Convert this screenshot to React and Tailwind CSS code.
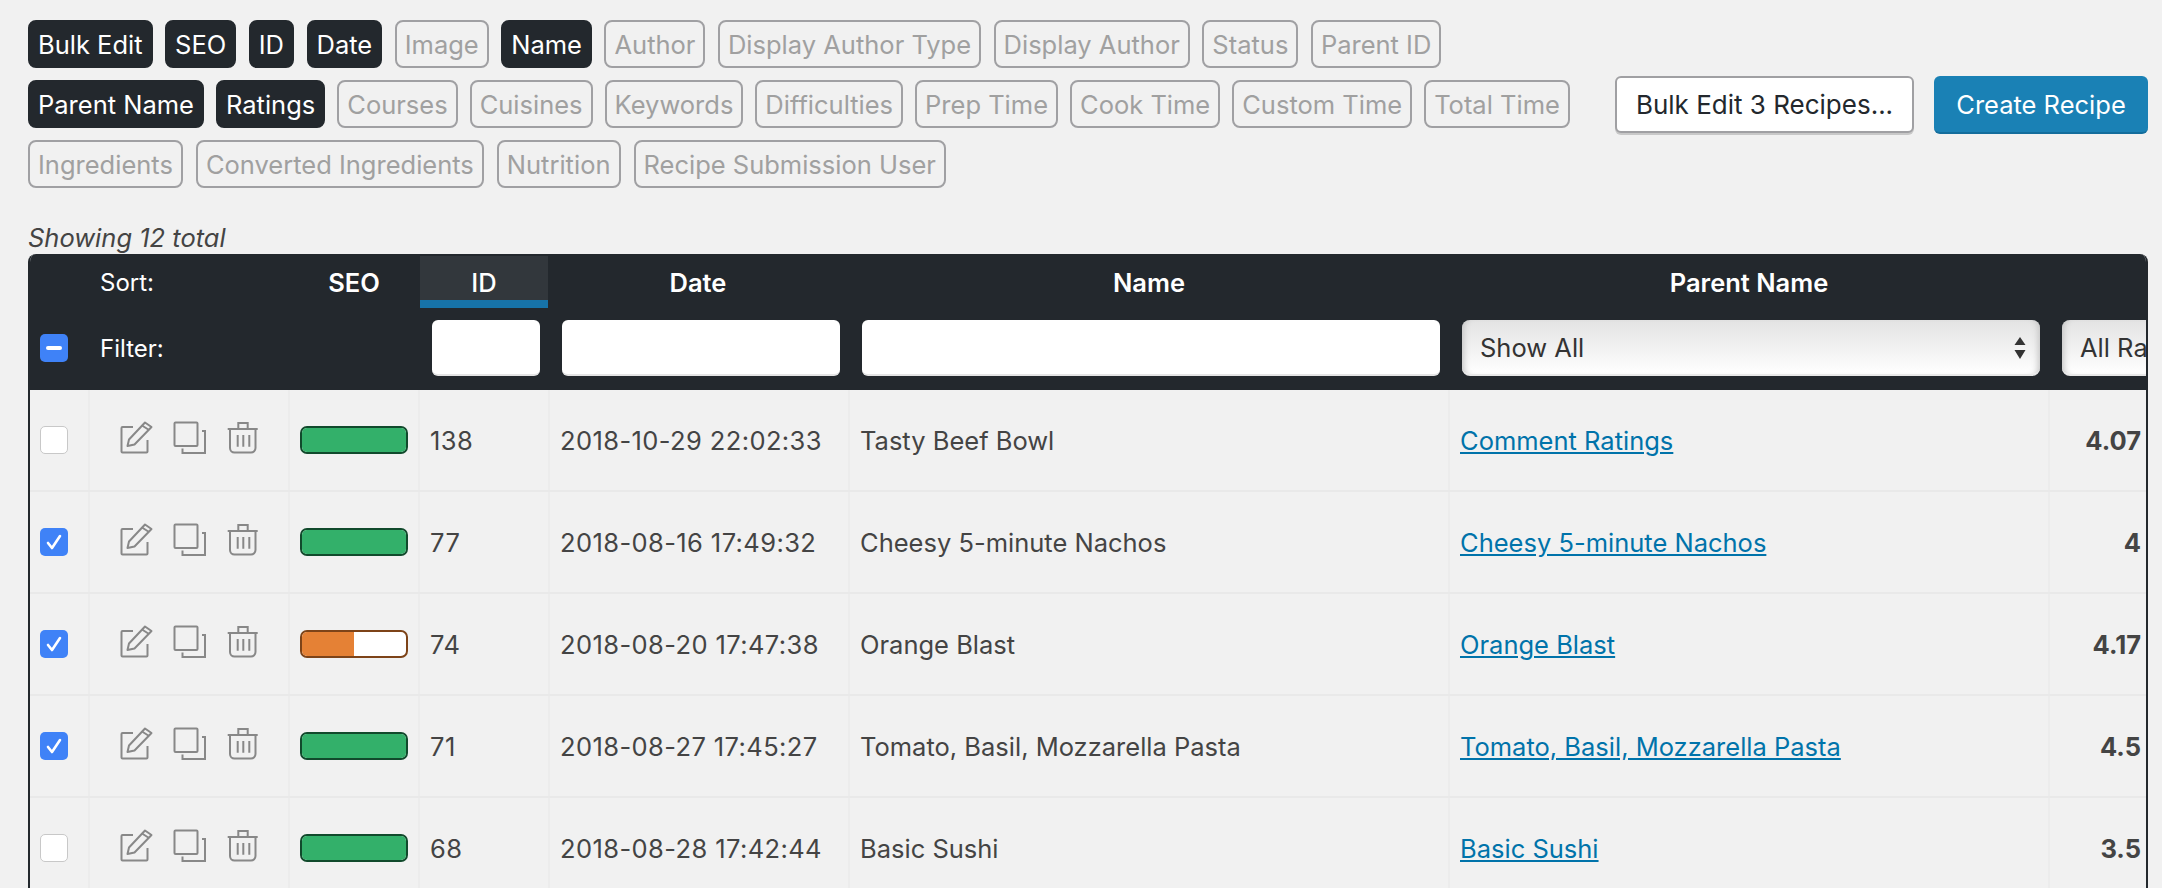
const on = ["Bulk Edit","SEO","ID","Date","Name","Parent Name","Ratings"];
const tagRows = [
  { gap: "gap-[12.5px]", tags: ["Bulk Edit","SEO","ID","Date","Image","Name","Author","Display Author Type","Display Author","Status","Parent ID"] },
  { gap: "gap-3", tags: ["Parent Name","Ratings","Courses","Cuisines","Keywords","Difficulties","Prep Time","Cook Time","Custom Time","Total Time"] },
  { gap: "gap-[13px]", tags: ["Ingredients","Converted Ingredients","Nutrition","Recipe Submission User"] },
];
const rows = [
  { id: 138, date: "2018-10-29 22:02:33", name: "Tasty Beef Bowl", parent: "Comment Ratings", rating: "4.07", checked: false, seo: "green" },
  { id: 77, date: "2018-08-16 17:49:32", name: "Cheesy 5-minute Nachos", parent: "Cheesy 5-minute Nachos", rating: "4", checked: true, seo: "green" },
  { id: 74, date: "2018-08-20 17:47:38", name: "Orange Blast", parent: "Orange Blast", rating: "4.17", checked: true, seo: "orange" },
  { id: 71, date: "2018-08-27 17:45:27", name: "Tomato, Basil, Mozzarella Pasta", parent: "Tomato, Basil, Mozzarella Pasta", rating: "4.5", checked: true, seo: "green" },
  { id: 68, date: "2018-08-28 17:42:44", name: "Basic Sushi", parent: "Basic Sushi", rating: "3.5", checked: false, seo: "green" },
];

function Tag({ label }) {
  const active = on.includes(label);
  return (
    <span className={"flex h-12 items-center rounded-lg border-2 px-[8px] pt-[2px] whitespace-nowrap " + (active ? "border-[#23282d] bg-[#23282d] text-white" : "border-[#a0a0a3] text-[#a0a0a0]")}>
      {label}
    </span>
  );
}

function EditIcon() {
  return (
    <svg width="34" height="40" viewBox="0 0 34 40" fill="none" stroke="#888" strokeWidth="2">
      <path d="M13 7H2.5a1 1 0 0 0-1 1V31.5a1 1 0 0 0 1 1H26.5a1 1 0 0 0 1-1V20" />
      <path d="M7.5 26 9 19.5 25 2.5 31.5 7 14.5 24.5Z" strokeLinejoin="round" />
      <path d="M22 5.5 29 10" />
    </svg>
  );
}
function CopyIcon() {
  return (
    <svg width="34" height="40" viewBox="0 0 34 40" fill="none" stroke="#888" strokeWidth="2">
      <rect x="2.5" y="2.5" width="23" height="23.5" rx="1" />
      <path d="M30 11H33V33H10.5V28.5" />
    </svg>
  );
}
function TrashIcon() {
  return (
    <svg width="34" height="40" viewBox="0 0 34 40" fill="none" stroke="#888" strokeWidth="2">
      <path d="M1.7 9H31.7M12.3 9V3H21.7V9" />
      <path d="M4 9V28A4.5 4.5 0 0 0 8.5 32.5H25A4.5 4.5 0 0 0 29.5 28V9" />
      <path d="M11.7 15V26.7M17.3 15V26.7M23.3 15V26.7" />
    </svg>
  );
}

function Checkbox({ state }) {
  if (state === "off") {
    return <span className="block h-7 w-7 rounded-[5px] border border-[#c8c8c8] bg-white" />;
  }
  return (
    <span className="flex h-7 w-7 items-center justify-center rounded-[5px] bg-[#3f82f7]">
      {state === "mixed" ? (
        <span className="h-1 w-4 rounded-sm bg-white" />
      ) : (
        <svg width="18" height="18" viewBox="0 0 18 18" fill="none" stroke="#fff" strokeWidth="2.6" strokeLinecap="round" strokeLinejoin="round">
          <path d="M3 10 7 15 15 3" />
        </svg>
      )}
    </span>
  );
}

function Bar({ kind }) {
  const green = kind === "green";
  return (
    <span className={"block h-7 w-[108px] overflow-hidden rounded-[7px] border-2 bg-white " + (green ? "border-[#114a2c]" : "border-[#7d4318]")}>
      <span className={"block h-full " + (green ? "w-full bg-[#33b06a]" : "w-1/2 bg-[#e58135]")} />
    </span>
  );
}

function Input({ className }) {
  return <span className={"block h-14 rounded-md border-b-2 border-[#e4e4e4] bg-white " + className} />;
}

function Select({ label, className }) {
  return (
    <span className={"flex h-14 shrink-0 items-center justify-between rounded-lg border-b-2 border-[#e8e8e8] bg-gradient-to-b from-[#e3e3e3] to-white pl-[18px] pr-[14px] pt-[2px] text-[#333] shadow-[inset_7px_0_6px_-5px_#c4c4c4,inset_-7px_0_6px_-5px_#c4c4c4] " + className}>
      <span>{label}</span>
      <svg width="12" height="24" viewBox="0 0 12 24" fill="#333">
        <path d="M6 1 11.5 9H.5ZM6 23 .5 14H11.5Z" />
      </svg>
    </span>
  );
}

export default function App() {
  return (
    <div className="h-[888px] overflow-hidden bg-[#f1f1f1] pl-[28px] pr-[14px] pt-5 font-['Inter','Liberation_Sans',sans-serif] text-[25.5px] leading-none text-[#444]">
      <div className="flex items-center">
        <div className="flex w-[1587px] flex-col gap-3">
          {tagRows.map((r, i) => (
            <div key={i} className={"flex " + r.gap}>
              {r.tags.map((t) => <Tag key={t} label={t} />)}
            </div>
          ))}
        </div>
        <div className="flex gap-5 pt-[1px]">
          <button className="h-[57px] w-[299px] rounded-md border-2 border-[#a0a0a3] bg-white pt-[2px] text-[26px] text-[#23282d] shadow-[0_2px_0_#c8c8c8]">Bulk Edit 3 Recipes...</button>
          <button className="h-[58px] w-[214px] rounded-md border-b-2 border-[#136d9c] bg-[#1a81b5] pt-[2px] text-white">Create Recipe</button>
        </div>
      </div>

      <div className="mt-[37px] italic">Showing 12 total</div>

      <div className="mt-[3px] w-[2120px] overflow-hidden rounded-t-lg border-x-2 border-[#23282d]">
        <div className="w-[2400px] bg-[#23282d] text-white">
          <div className="flex h-14 items-center font-semibold">
            <span className="w-[60px] shrink-0" />
            <span className="w-[200px] shrink-0 pl-[10px] pt-[3px] text-[24px] font-normal">Sort:</span>
            <span className="mr-[2px] w-[128px] shrink-0 pt-[3px] text-center">SEO</span>
            <span className="flex h-[52px] w-[128px] shrink-0 items-center justify-center border-b-8 border-[#1773a8] bg-[#32373c] pt-[10px] font-medium">ID</span>
            <span className="w-[300px] shrink-0 pt-[3px] text-center">Date</span>
            <span className="w-[602px] shrink-0 pt-[3px] text-center">Name</span>
            <span className="w-[598px] shrink-0 pt-[3px] text-center">Parent Name</span>
            <span className="flex-1" />
          </div>
          <div className="flex h-20 items-center pb-1">
            <span className="flex w-[60px] shrink-0 pl-[10px]"><Checkbox state="mixed" /></span>
            <span className="w-[200px] shrink-0 pl-[10px] pt-[2px] text-[24px]">Filter:</span>
            <span className="w-[130px] shrink-0" />
            <span className="w-[130px] shrink-0 pl-3"><Input className="w-[108px]" /></span>
            <span className="w-[300px] shrink-0 pl-3"><Input className="w-[278px]" /></span>
            <span className="w-[602px] shrink-0 pl-3"><Input className="w-[578px]" /></span>
            <span className="w-[598px] shrink-0 pl-[10px]"><Select label="Show All" className="w-[578px]" /></span>
            <span className="pl-[12px]"><Select label="All Ratings" className="w-[200px]" /></span>
          </div>
        </div>

        <div className="w-[2400px]">
          {rows.map((r) => (
            <div key={r.id} className="flex h-[102px] items-center border-b-2 border-[#e9e9e9]">
              <span className="flex h-full w-[60px] shrink-0 items-center border-r-2 border-[#ececec] pl-[10px]"><Checkbox state={r.checked ? "on" : "off"} /></span>
              <span className="flex h-full w-[200px] shrink-0 items-center gap-[18px] border-r-2 border-[#ececec] pl-[30px]">
                <EditIcon />
                <CopyIcon />
                <span className="ml-[2px]"><TrashIcon /></span>
              </span>
              <span className="flex h-full w-[130px] shrink-0 items-center border-r-2 border-[#ececec] pl-[10px]"><Bar kind={r.seo} /></span>
              <span className="flex h-full w-[130px] shrink-0 items-center border-r-2 border-[#ececec] pl-[10px] pt-[2px] tracking-[0.5px]">{r.id}</span>
              <span className="flex h-full w-[300px] shrink-0 items-center border-r-2 border-[#ececec] pl-[10px] pt-[2px] tracking-[0.4px]">{r.date}</span>
              <span className="flex h-full w-[600px] shrink-0 items-center border-r-2 border-[#ececec] pl-[10px] pt-[2px]">{r.name}</span>
              <span className="flex h-full w-[600px] shrink-0 items-center border-r-2 border-[#ececec] pl-[10px] pt-[2px]"><a className="text-[#0073aa] underline">{r.parent}</a></span>
              <span className="flex h-full w-[91px] shrink-0 items-center justify-end pt-[2px] font-bold">{r.rating}</span>
            </div>
          ))}
        </div>
      </div>
    </div>
  );
}
